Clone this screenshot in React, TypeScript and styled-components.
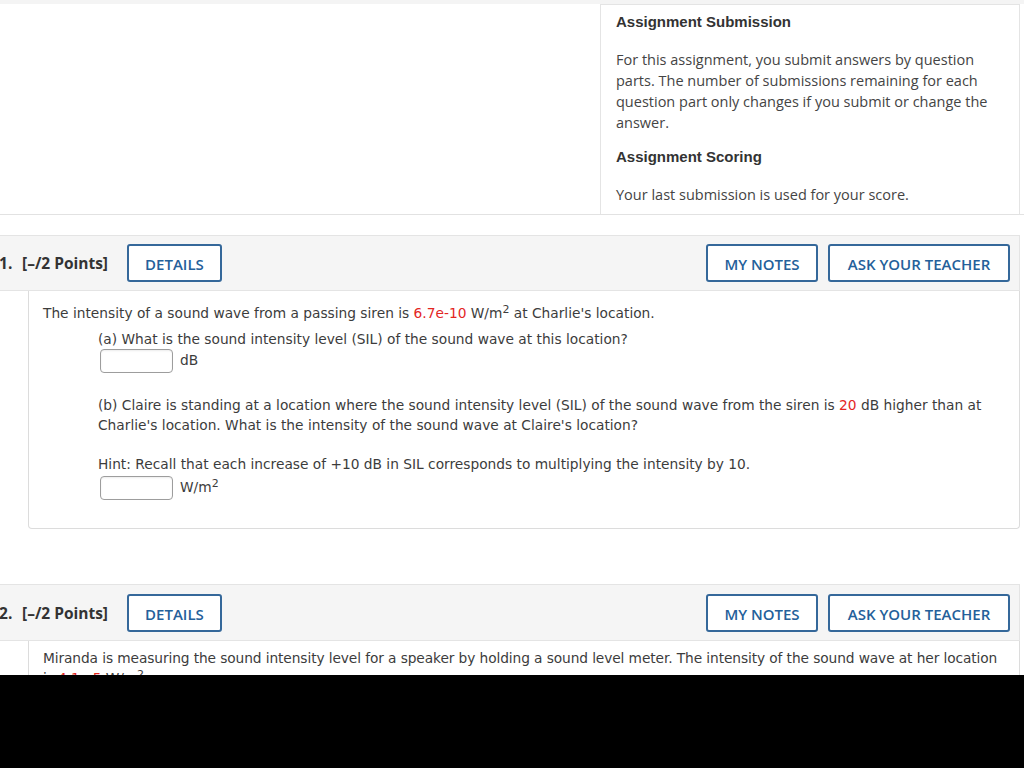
import React from "react";
import styled, { createGlobalStyle } from "styled-components";

const Global = createGlobalStyle`
  html, body { margin: 0; padding: 0; background: #000; }
  * { box-sizing: border-box; }
`;

const Screen = styled.div`
  width: 1024px;
  height: 768px;
  display: flex;
  flex-direction: column;
  background: #000;
`;

const Viewport = styled.div`
  height: 675px;
  overflow: hidden;
  background: #fff;
  display: flex;
  flex-direction: column;
`;

const TopStrip = styled.div`
  height: 4px;
  background: #f4f4f4;
  flex: none;
`;

const InfoRow = styled.div`
  display: flex;
  justify-content: flex-end;
  border-bottom: 1px solid #e2e2e2;
  padding-right: 4px;
`;

const InfoPanel = styled.div`
  width: 420px;
  border: 1px solid #e4e4e4;
  border-bottom: none;
  padding: 7px 15px 9px;
  color: #3d3d3d;
`;

const InfoHeading = styled.h4`
  margin: 0 0 17px;
  font-family: "Liberation Sans", Arial, sans-serif;
  font-weight: 700;
  font-size: 15px;
  line-height: 20px;
  color: #333;
`;

const InfoText = styled.p`
  margin: 0 0 14px;
  font-family: "Open Sans", sans-serif;
  font-size: 14.5px;
  line-height: 21px;
  color: #444;
  &:last-child { margin-bottom: 0; }
`;

const Question = styled.section<{ $top: number }>`
  margin-top: ${(p) => p.$top}px;
  margin-right: 4px;
  flex: none;
`;

const QHeader = styled.div<{ $h: number }>`
  height: ${(p) => p.$h}px;
  display: flex;
  align-items: center;
  background: #f5f5f5;
  border-top: 1px solid #e4e4e4;
  border-right: 1px solid #e4e4e4;
  border-bottom: 1px solid #e4e4e4;
  padding: 0 9px 0 0;
`;

const QNumber = styled.span`
  font-family: "Open Sans", sans-serif;
  font-weight: 700;
  font-size: 15.5px;
  color: #333;
  margin-left: -1px;
  width: 23px;
`;

const QPoints = styled.span`
  font-family: "Open Sans", sans-serif;
  font-weight: 700;
  font-size: 15.5px;
  color: #333;
  margin-right: 19px;
`;

const Spacer = styled.div`
  flex: 1;
`;

const HeaderButton = styled.button<{ $w: number }>`
  width: ${(p) => p.$w}px;
  height: 38px;
  border: 2px solid #35689a;
  border-radius: 3px;
  background: #fff;
  color: #24609a;
  font-family: "Open Sans", sans-serif;
  font-weight: 600;
  font-size: 15px;
  text-transform: uppercase;
  padding: 2px 0 0;
  display: flex;
  align-items: center;
  justify-content: center;
  & + & { margin-left: 10px; }
`;

const QBody = styled.div<{ $h?: number; $pt: number; $tight?: boolean }>`
  margin-left: 28px;
  border: 1px solid #dcdcdc;
  border-top: none;
  border-radius: 0 0 4px 4px;
  padding: ${(p) => p.$pt}px ${(p) => (p.$tight ? 10 : 14)}px 0 14px;
  ${(p) => (p.$h ? `height: ${p.$h}px;` : "")}
  font-family: "DejaVu Sans", Verdana, sans-serif;
  font-size: 13.75px;
  line-height: 20px;
  letter-spacing: ${(p) => (p.$tight ? "-0.1px" : "normal")};
  color: #3c3c3c;
`;

const Line = styled.div<{ $indent?: boolean; $mt?: number }>`
  padding-left: ${(p) => (p.$indent ? 55 : 0)}px;
  margin-top: ${(p) => p.$mt ?? 0}px;
`;

const Red = styled.span`
  color: #e3261f;
`;

const Sup = styled.sup`
  font-size: 11px;
  line-height: 0;
  vertical-align: 5px;
`;

const AnswerRow = styled.div<{ $mt?: number }>`
  display: flex;
  align-items: center;
  gap: 7px;
  padding-left: 57px;
  margin-top: ${(p) => p.$mt ?? 0}px;
  height: 24px;
`;

const AnswerBox = styled.input`
  width: 73px;
  height: 24px;
  border: 1px solid #9d9d9d;
  border-radius: 4px;
  background: #fff;
  padding: 0;
  box-shadow: inset 0 1px 2px rgba(0,0,0,0.08);
`;

const Unit = styled.span`
  margin-top: -3px;
`;

const BlackBar = styled.div`
  flex: 1;
  background: #000;
`;

function Header({ n, h }: { n: number; h: number }) {
  return (
    <QHeader $h={h}>
      <QNumber>{n}.</QNumber>
      <QPoints>[–/2 Points]</QPoints>
      <HeaderButton $w={95}>Details</HeaderButton>
      <Spacer />
      <HeaderButton $w={112}>My Notes</HeaderButton>
      <HeaderButton $w={182}>Ask Your Teacher</HeaderButton>
    </QHeader>
  );
}

export default function App() {
  return (
    <>
      <Global />
      <Screen>
        <Viewport>
          <TopStrip />
          <InfoRow>
            <InfoPanel>
              <InfoHeading>Assignment Submission</InfoHeading>
              <InfoText>
                For this assignment, you submit answers by question parts. The number of submissions
                remaining for each question part only changes if you submit or change the answer.
              </InfoText>
              <InfoHeading>Assignment Scoring</InfoHeading>
              <InfoText>Your last submission is used for your score.</InfoText>
            </InfoPanel>
          </InfoRow>

          <Question $top={20}>
            <Header n={1} h={56} />
            <QBody $h={238} $pt={12}>
              <Line>
                The intensity of a sound wave from a passing siren is <Red>6.7e-10</Red> W/m<Sup>2</Sup> at
                Charlie's location.
              </Line>
              <Line $indent $mt={6}>
                (a) What is the sound intensity level (SIL) of the sound wave at this location?
              </Line>
              <AnswerRow>
                <AnswerBox aria-label="answer a" />
                <Unit>dB</Unit>
              </AnswerRow>
              <Line $indent $mt={22}>
                (b) Claire is standing at a location where the sound intensity level (SIL) of the sound
                wave from the siren is <Red>20</Red> dB higher than at Charlie's location. What is the
                intensity of the sound wave at Claire's location?
              </Line>
              <Line $indent $mt={19}>
                Hint: Recall that each increase of +10 dB in SIL corresponds to multiplying the intensity
                by 10.
              </Line>
              <AnswerRow $mt={2}>
                <AnswerBox aria-label="answer b" />
                <Unit>
                  W/m<Sup>2</Sup>
                </Unit>
              </AnswerRow>
            </QBody>
          </Question>

          <Question $top={55}>
            <Header n={2} h={57} />
            <QBody $pt={7} $tight>
              <Line>
                Miranda is measuring the sound intensity level for a speaker by holding a sound level
                meter. The intensity of the sound wave at her location is <Red>4.1e-5</Red> W/m<Sup>2</Sup>.
              </Line>
            </QBody>
          </Question>
        </Viewport>
        <BlackBar />
      </Screen>
    </>
  );
}
